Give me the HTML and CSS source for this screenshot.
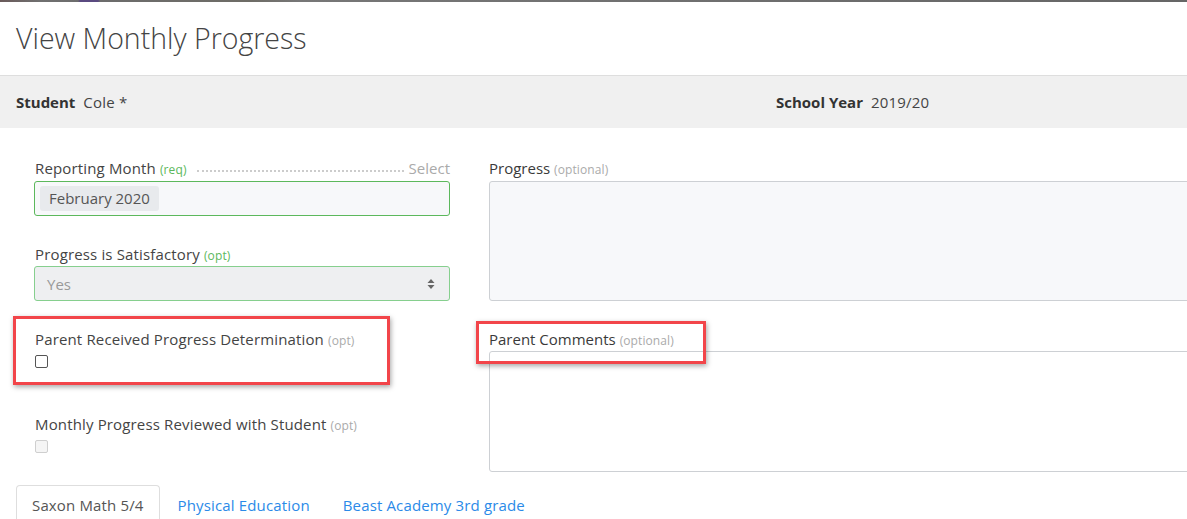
FILE: index.html
```html
<!DOCTYPE html>
<html>
<head>
<meta charset="utf-8">
<link rel="stylesheet" href="styles.css">
</head>
<body>
<div class="topstrip"></div>
<header class="modal-header">
  <h1 class="title">View Monthly Progress</h1>
</header>
<div class="infobar">
  <div class="info"><span class="info-key">Student</span><span class="info-val">Cole *</span></div>
  <div class="info"><span class="info-key">School Year</span><span class="info-val">2019/20</span></div>
</div>
<main class="form">
  <div class="col col-left">
    <div class="field field-month">
      <div class="label-row">
        <label class="label">Reporting Month <span class="hint hint-green">(req)</span></label>
        <span class="dots"></span>
        <span class="select-link">Select</span>
      </div>
      <div class="chip-input"><span class="chip">February 2020</span></div>
    </div>
    <div class="field field-sat">
      <label class="label">Progress is Satisfactory <span class="hint hint-green">(opt)</span></label>
      <div class="select">
        <span class="select-val">Yes</span>
        <svg class="select-arrows" width="8" height="12" viewBox="0 0 8 12"><path d="M4 1 L7.5 5 L0.5 5 Z M4 11 L7.5 7 L0.5 7 Z" fill="#666"/></svg>
      </div>
    </div>
    <div class="field field-check">
      <label class="label">Parent Received Progress Determination <span class="hint">(opt)</span></label>
      <span class="checkbox"></span>
    </div>
    <div class="field field-check2">
      <label class="label">Monthly Progress Reviewed with Student <span class="hint">(opt)</span></label>
      <span class="checkbox checkbox-disabled"></span>
    </div>
  </div>
  <div class="col col-right">
    <div class="field field-progress">
      <label class="label label-narrow">Progress <span class="hint">(optional)</span></label>
      <div class="textarea textarea-gray"></div>
    </div>
    <div class="field field-comments">
      <label class="label label-narrow">Parent Comments <span class="hint">(optional)</span></label>
      <div class="textarea"></div>
    </div>
  </div>
  <div class="highlight highlight-left"></div>
  <div class="highlight highlight-right"></div>
</main>
<nav class="tabs">
  <span class="tab tab-active">Saxon Math 5/4</span>
  <a class="tab tab-link tab-pe">Physical Education</a>
  <a class="tab tab-link tab-beast">Beast Academy 3rd grade</a>
</nav>
</body>
</html>
```
FILE: styles.css
```css
html, body {
  margin: 0;
  padding: 0;
  background: #ffffff;
  overflow: hidden;
}
body {
  width: 1187px;
  height: 519px;
  font-family: "Open Sans", "Liberation Sans", sans-serif;
  font-size: 15px;
  color: #444;
  position: relative;
}
.topstrip {
  height: 2px;
  background: linear-gradient(90deg, #6a5a5a 0px, #707070 40px, #6d6d6d 78px, #5a4a80 80px, #5a4a80 98px, #6c6c6c 100px, #6e6c66 250px, #777 300px, #666 1187px);
}
.modal-header {
  height: 73px;
  border-bottom: 1px solid #dedede;
  display: flex;
  align-items: center;
  padding-left: 16px;
}
.title {
  margin: 0;
  font-weight: 300;
  font-size: 28.5px;
  color: #444;
  line-height: 1;
  position: relative;
  top: 0;
}
.infobar {
  height: 52px;
  background: #f0f0f0;
  display: grid;
  grid-template-columns: 760px 760px;
  align-items: center;
}
.info {
  padding-left: 16px;
  font-size: 15px;
  color: #444;
}
.info-key {
  font-weight: 700;
  color: #333;
  margin-right: 8px;
}
.info-val {
  letter-spacing: 0.2px;
}
.form {
  position: relative;
  display: grid;
  grid-template-columns: 416px 800px;
  column-gap: 39px;
  padding: 30px 0 0 34px;
  height: 327px;
  box-sizing: border-box;
}
.col {
  display: flex;
  flex-direction: column;
}
.label {
  display: block;
  height: 20px;
  font-size: 15px;
  line-height: 20px;
  color: #444;
  padding-left: 1px;
  white-space: nowrap;
  letter-spacing: 0.15px;
}
.label-narrow {
  letter-spacing: 0;
  padding-left: 0;
  color: #3a3a3a;
}
.hint {
  font-size: 12px;
  line-height: 1;
  color: #aaa;
  letter-spacing: 0.1px;
}
.hint-green {
  color: #5cb85c;
}
.label-row {
  display: flex;
  align-items: center;
  height: 20px;
}
.dots {
  flex: 1;
  margin: 6px 5px 0 10px;
  border-bottom: 2px dotted #ccc;
}
.select-link {
  color: #aaa;
  line-height: 20px;
}
.chip-input {
  margin-top: 3px;
  height: 35px;
  box-sizing: border-box;
  border: 1px solid #5cb85c;
  border-radius: 3px;
  background: #f7f8fa;
  display: flex;
  align-items: center;
  padding-left: 5px;
}
.chip {
  background: #e8eaed;
  border-radius: 3px;
  color: #555;
  padding: 2px 9px;
  line-height: 21px;
}
.field-sat {
  margin-top: 28px;
}
.select {
  margin-top: 2px;
  height: 35px;
  box-sizing: border-box;
  border: 1px solid #86cf8e;
  border-radius: 3px;
  background: #eeeff1;
  display: flex;
  align-items: center;
  justify-content: space-between;
  padding: 0 14px 0 12px;
}
.select-val {
  color: #999;
}
.field-check {
  margin-top: 28px;
}
.checkbox {
  display: block;
  width: 11px;
  height: 11px;
  border: 1px solid #555;
  border-radius: 2px;
  margin: 6px 0 0 1px;
  background: #fff;
}
.checkbox-disabled {
  border-color: #cfcfcf;
  background: #f5f5f5;
}
.field-check2 {
  margin-top: 46px;
}
.textarea {
  margin-top: 2px;
  height: 121px;
  box-sizing: border-box;
  border: 1px solid #cdd0d4;
  border-radius: 3px;
  background: #fff;
}
.textarea-gray {
  margin-top: 3px;
  height: 120px;
  background: #f7f8fa;
}
.field-comments {
  margin-top: 28px;
}
.highlight {
  position: absolute;
  border: 3px solid #f2454a;
  box-shadow: 1px 2px 5px rgba(0, 0, 0, 0.35);
  box-sizing: border-box;
}
.highlight-left {
  left: 13px;
  top: 188px;
  width: 377px;
  height: 69px;
}
.highlight-right {
  left: 476px;
  top: 193px;
  width: 230px;
  height: 43px;
}
.tabs {
  display: flex;
  align-items: stretch;
  padding-left: 16px;
  margin-top: 30px;
  height: 40px;
}
.tab {
  display: flex;
  align-items: center;
  padding: 0 15px;
  font-size: 15px;
  letter-spacing: 0.15px;
  height: 40px;
  box-sizing: border-box;
}
.tab-active {
  border: 1px solid #dedede;
  border-bottom: none;
  border-radius: 4px 4px 0 0;
  color: #555;
  padding-bottom: 1px;
}
.tab-link {
  color: #2b8ae8;
  text-decoration: none;
  padding-bottom: 1px;
}
.tab-pe {
  margin-left: 3px;
}
.tab-beast {
  margin-left: 3px;
}
```
